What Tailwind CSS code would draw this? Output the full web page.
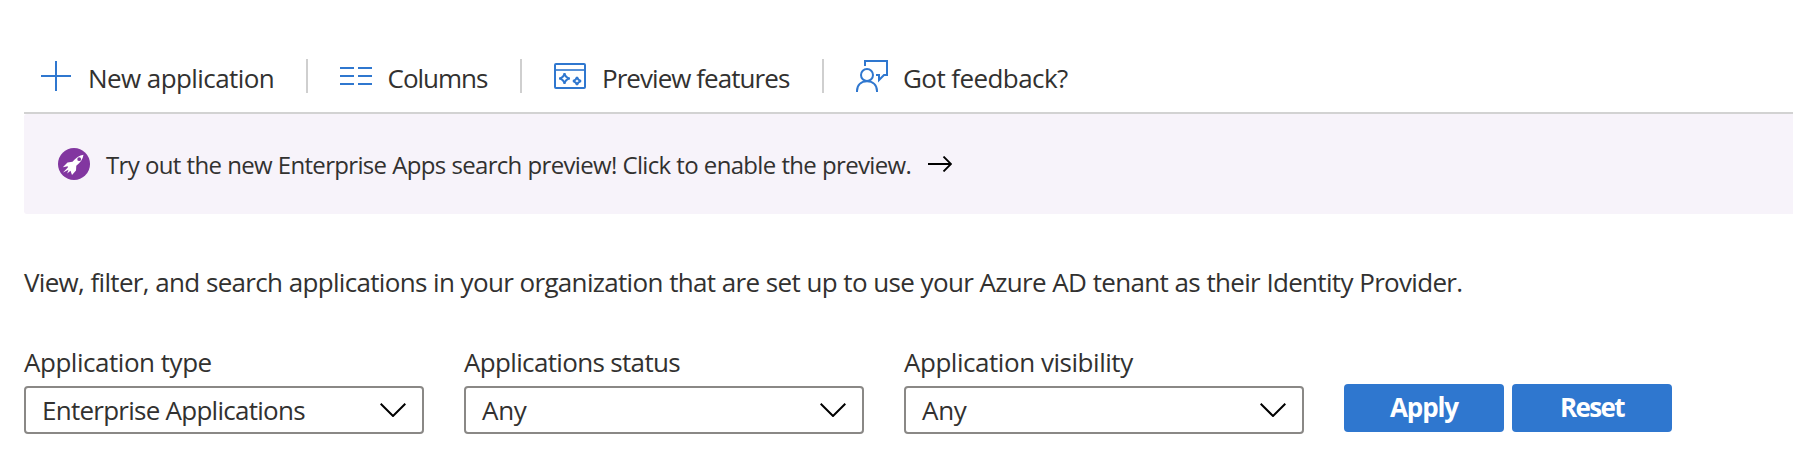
<!DOCTYPE html>
<html lang="en">
<head>
<meta charset="utf-8">
<title>Enterprise applications</title>
<script src="https://cdn.jsdelivr.net/npm/@tailwindcss/browser@4"></script>
</head>
<body class="bg-white text-[#323130] font-['Open_Sans',sans-serif] text-[26px] leading-[34px] whitespace-nowrap overflow-hidden">
<div class="h-[457px] pl-6">
  <header class="flex h-[114px] items-end border-b-2 border-[#d2d2d2] pb-[19px]">
    <div class="flex h-[34px] w-[282px] items-center pl-[17px]">
      <svg class="h-[30px] w-[30px]" viewBox="0 0 30 30" fill="none" stroke="#2f77cf" stroke-width="2"><path d="M15 0V30M0 15H30"/></svg>
      <span class="mt-1 ml-[17px] tracking-[-0.57px]">New application</span>
    </div>
    <div class="h-[34px] w-0.5 bg-[#cfcfcf]"></div>
    <div class="flex h-[34px] w-[212px] items-center pl-8">
      <svg class="h-8 w-8" viewBox="0 0 32 32" fill="none" stroke="#2f77cf" stroke-width="2"><path d="M0 8H14M18 8H32M0 16H14M18 16H32M0 24H14M18 24H32"/></svg>
      <span class="mt-1 ml-[15.5px] tracking-[-1px]">Columns</span>
    </div>
    <div class="h-[34px] w-0.5 bg-[#cfcfcf]"></div>
    <div class="flex h-[34px] w-[300px] items-center pl-8">
      <svg class="h-8 w-8" viewBox="0 0 32 32" fill="none" stroke="#2f77cf" stroke-width="2"><rect x="1" y="4" width="30" height="24" rx="1"/><path d="M1 10H31" stroke-width="1.6"/><path d="M10.500 13.200Q11.300 17.600 15.800 18.500Q11.300 19.400 10.500 23.800Q9.700 19.400 5.200 18.500Q9.700 17.600 10.500 13.200ZM23 17Q23.800 20.200 27 21Q23.800 21.800 23 25Q22.200 21.800 19 21Q22.200 20.200 23 17Z" stroke-width="2"/></svg>
      <span class="mt-1 ml-[16px] tracking-[-0.95px]">Preview features</span>
    </div>
    <div class="h-[34px] w-0.5 bg-[#cfcfcf]"></div>
    <div class="flex h-[34px] items-center pl-8">
      <svg class="h-8 w-8" viewBox="0 0 32 32" fill="none" stroke="#2f77cf" stroke-width="2"><circle cx="11" cy="15" r="6"/><path d="M1 32V31C1 25 5 21.200 11 21.200S21 25 21 31V32M9 6V1H31V15H28L23 20V15H20"/></svg>
      <span class="mt-1 ml-[15px] tracking-[-0.57px]">Got feedback?</span>
    </div>
  </header>
  <section class="flex h-[100px] items-center rounded-l-[3px] bg-[#f7f3fa] pl-[34px] text-2xl leading-[34px]">
    <svg class="h-8 w-8" viewBox="0 0 32 32"><circle cx="16" cy="16" r="16" fill="#8236a0"/><path fill="#fff" fill-rule="evenodd" d="M25.500 6.700C21.500 7.300 17.500 10 14.500 13.800L9.500 14.500L4.800 19.200L9.800 18.200L9.800 19.500L5 24.500L10.500 21.800L9.200 25.500L12.500 22.800L14 27L18 22.500L18.300 17.800C22.300 14.500 25 11 25.500 6.700ZM21.200 9.300A1.900 1.900 0 1 1 21.200 13.100A1.900 1.900 0 1 1 21.200 9.300Z"/></svg>
    <span class="mt-0.5 ml-[16px] tracking-[-0.68px] [word-spacing:0.36px]">Try out the new Enterprise Apps search preview! Click to enable the preview.</span>
    <svg class="ml-[17px] h-4 w-6" viewBox="0 0 24 16" fill="none" stroke="#000" stroke-width="1.8"><path d="M0 8H23M15.500 .5L23 8L15.500 15.500"/></svg>
  </section>
  <p class="mt-[51px] tracking-[-0.685px] [word-spacing:0.36px]">View, filter, and search applications in your organization that are set up to use your Azure AD tenant as their Identity Provider.</p>
  <div class="mt-[46px] flex gap-10">
    <div class="w-[400px]">
      <label class="block h-[41px] tracking-[-0.47px]">Application type</label>
      <div class="flex h-12 items-center justify-between rounded border-2 border-[#8a8886] px-4"><span class="tracking-[-0.74px]">Enterprise Applications</span>
        <svg class="h-[14px] w-[26px]" viewBox="0 0 26 14" fill="none" stroke="#000" stroke-width="2"><path d="M.7 .7L13 13L25.300 .7"/></svg></div>
    </div>
    <div class="w-[400px]">
      <label class="block h-[41px] tracking-[-0.66px]">Applications status</label>
      <div class="flex h-12 items-center justify-between rounded border-2 border-[#8a8886] px-4"><span class="tracking-[-0.3px]">Any</span>
        <svg class="h-[14px] w-[26px]" viewBox="0 0 26 14" fill="none" stroke="#000" stroke-width="2"><path d="M.7 .7L13 13L25.300 .7"/></svg></div>
    </div>
    <div class="w-[400px]">
      <label class="block h-[41px] tracking-[-0.46px]">Application visibility</label>
      <div class="flex h-12 items-center justify-between rounded border-2 border-[#8a8886] px-4"><span class="tracking-[-0.3px]">Any</span>
        <svg class="h-[14px] w-[26px]" viewBox="0 0 26 14" fill="none" stroke="#000" stroke-width="2"><path d="M.7 .7L13 13L25.300 .7"/></svg></div>
    </div>
    <div class="flex gap-2 pt-[39px] font-bold text-white">
      <button class="h-12 w-40 rounded bg-[#2f77cf] pb-[3px] tracking-[-1.1px]">Apply</button>
      <button class="h-12 w-40 rounded bg-[#2f77cf] pb-[3px] tracking-[-1.6px]">Reset</button>
    </div>
  </div>
</div>
</body>
</html>
